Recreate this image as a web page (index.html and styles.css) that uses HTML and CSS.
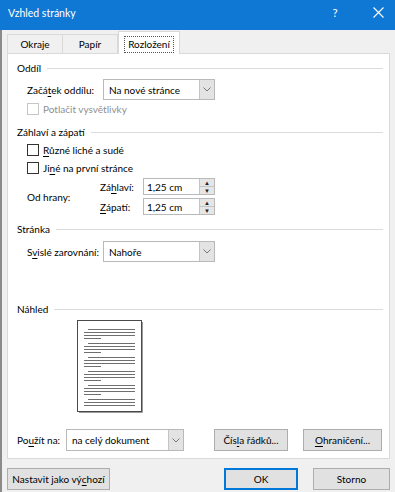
FILE: index.html
```html
<!DOCTYPE html>
<html lang="cs">
<head>
<meta charset="utf-8">
<title>Vzhled stránky</title>
<link rel="stylesheet" href="styles.css">
</head>
<body>
<div class="window">
  <div class="titlebar">
    <span class="title">Vzhled stránky</span>
    <span class="help">?</span>
    <span class="close"><svg width="11" height="11" viewBox="0 0 11 11"><path d="M0.5 0.5 L10.5 10.5 M10.5 0.5 L0.5 10.5" stroke="#fff" stroke-width="1.1" fill="none"/></svg></span>
  </div>
  <div class="body">
    <div class="tabs">
      <div class="tab t1">Okraje</div>
      <div class="tab t2">Papír</div>
      <div class="tab active"><span class="focus">Rozložení</span></div>
    </div>
    <div class="panel">
      <div class="ghead"><span>Oddíl</span><i></i></div>
      <div class="row r-start">
        <span class="lbl">Začá<u>t</u>ek oddílu:</span>
        <div class="combo w112"><span class="val">Na nové stránce</span><span class="arrow"><svg width="8" height="5" viewBox="0 0 8 5"><path d="M0.5 0.5 L4 4 L7.5 0.5" stroke="#777" fill="none"/></svg></span></div>
      </div>
      <div class="check disabled r-sup"><span class="box"></span><span>Potlačit vysvětlivky</span></div>

      <div class="ghead g2"><span>Záhlaví a zápatí</span><i></i></div>
      <div class="check r-c1"><span class="box"></span><span><u>R</u>ůzné liché a sudé</span></div>
      <div class="check r-c2"><span class="box"></span><span>Ji<u>n</u>é na první stránce</span></div>
      <div class="edge">
        <span class="lbl">Od hrany:</span>
        <div class="spins">
          <div class="srow"><span class="slbl">Zá<u>h</u>laví:</span><div class="spin"><span class="val">1,25 cm</span><span class="sbtns"><span class="sb">▲</span><span class="sb">▼</span></span></div></div>
          <div class="srow"><span class="slbl"><u>Z</u>ápatí:</span><div class="spin"><span class="val">1,25 cm</span><span class="sbtns"><span class="sb">▲</span><span class="sb">▼</span></span></div></div>
        </div>
      </div>

      <div class="ghead g3"><span>Stránka</span><i></i></div>
      <div class="row r-valign">
        <span class="lbl">S<u>v</u>islé zarovnání:</span>
        <div class="combo w112"><span class="val">Nahoře</span><span class="arrow"><svg width="8" height="5" viewBox="0 0 8 5"><path d="M0.5 0.5 L4 4 L7.5 0.5" stroke="#777" fill="none"/></svg></span></div>
      </div>

      <div class="ghead g4"><span>Náhled</span><i></i></div>
      <div class="preview">
        <svg class="page" width="66" height="93" viewBox="0 0 66 93">
          <rect x="0.5" y="0.5" width="64" height="91" fill="#fff" stroke="#4a4a4a"/>
          <path d="M65.5 2 V92.5 H2" stroke="#9a9a9a" fill="none"/>
          <g stroke="#6f6f6f" stroke-width="1">
            <path d="M11 9.5 H58 M7 12.5 H58 M7 15.5 H58 M7 18.5 H24"/>
            <path d="M11 23.5 H58 M7 26.5 H58 M7 29.5 H58 M7 32.5 H24"/>
            <path d="M11 37.5 H58 M7 40.5 H58 M7 43.5 H58 M7 46.5 H24"/>
            <path d="M11 51.5 H58 M7 54.5 H58 M7 57.5 H58 M7 60.5 H24"/>
            <path d="M11 65.5 H58 M7 68.5 H58 M7 71.5 H58 M7 74.5 H24"/>
            <path d="M11 79.5 H58 M7 82.5 H58 M7 85.5 H58"/>
          </g>
        </svg>
      </div>

      <div class="row r-apply">
        <span class="lbl2">Po<u>u</u>žít na:</span>
        <div class="combo w118"><span class="val">na celý dokument</span><span class="arrow"><svg width="8" height="5" viewBox="0 0 8 5"><path d="M0.5 0.5 L4 4 L7.5 0.5" stroke="#777" fill="none"/></svg></span></div>
        <button class="btn b-lines">Čís<u>l</u>a řádků...</button>
        <button class="btn b-borders"><u>O</u>hraničení...</button>
      </div>
    </div>
    <div class="footer">
      <button class="btn b-default">Nastavit jako vý<u>c</u>hozí</button>
      <button class="btn b-ok">OK</button>
      <button class="btn b-cancel">Storno</button>
    </div>
  </div>
</div>
</body>
</html>
```

FILE: styles.css
```css
* { box-sizing: border-box; }
html, body { margin: 0; padding: 0; }
body {
  width: 395px;
  height: 492px;
  overflow: hidden;
  background: #f0f0f0;
  font-family: Lato, "Noto Sans", sans-serif;
  font-size: 10px;
  line-height: 14px;
  color: #000;
  white-space: nowrap;
}
u { text-decoration: underline; text-underline-offset: 1.5px; }

.window { width: 395px; height: 492px; display: flex; flex-direction: column; }

.titlebar {
  height: 30px;
  background: #0f78d4;
  color: #fff;
  display: flex;
  align-items: center;
  padding-left: 8px;
  flex: none;
}
.title { font-size: 10.5px; flex: 1; line-height: 1; margin-top: -4px; }
.help { width: 16px; text-align: center; margin-right: 30px; margin-top: -4px; font-size: 11.5px; }
.close { width: 11px; height: 11px; margin-right: 11px; margin-top: -6px; display: flex; }

.body {
  flex: 1;
  border-left: 2px solid #8b8b8b;
  padding: 0 5px 0 5px;
  display: flex;
  flex-direction: column;
}

.tabs { display: flex; height: 22px; margin-top: 1px; align-items: flex-end; position: relative; z-index: 1; }
.tab {
  height: 19px;
  border: 1px solid #d9d9d9;
  border-bottom: none;
  display: flex;
  align-items: center;
  justify-content: center;
  background: #f0f0f0;
}
.t1 { width: 56px; }
.t2 { width: 55px; border-left: none; }
.tab.active {
  width: 62px;
  background: #fff;
  margin-bottom: -1px;
  height: 23px;
  align-items: flex-start;
  padding-top: 4px;
}
.focus { border: 1px dotted #555; padding: 0 3px; line-height: 14px; height: 17px; }

.panel {
  width: 383px;
  height: 406px;
  background: #fff;
  border: 1px solid #d9d9d9;
  padding: 7px 6px 7px 9px;
  display: flex;
  flex-direction: column;
}

.ghead { height: 14px; display: flex; align-items: center; gap: 6px; }
.ghead span { line-height: 14px; }
.ghead i { flex: 1; height: 1px; background: #dcdcdc; }
.g2 { margin-top: 8px; }
.g3 { margin-top: 7px; }
.g4 { margin-top: 40px; }

.row { display: flex; align-items: center; }
.lbl { width: 76px; margin-left: 10px; flex: none; }
.lbl2 { width: 49px; flex: none; }
.r-start { margin-top: 4px; height: 21px; }
.r-valign { margin-top: 5px; height: 21px; }

.combo {
  height: 21px;
  border: 1px solid #b9b9b9;
  display: flex;
  align-items: stretch;
  background: #fff;
  flex: none;
}
.w112 { width: 112px; }
.w118 { width: 118px; height: 22px; }
.combo .val { flex: 1; padding-left: 5px; display: flex; align-items: center; }
.arrow {
  width: 15px;
  background: #e3e3e3;
  border-left: 1px solid #c4c4c4;
  display: flex;
  align-items: center;
  justify-content: center;
}

.check { display: flex; align-items: center; height: 16px; margin-left: 10px; gap: 4px; }
.check .box { width: 12px; height: 12px; border: 1px solid #333; background: #fff; flex: none; }
.disabled { color: #8f8f8f; }
.disabled .box { border-color: #c6c6c6; }
.r-sup { margin-top: 1px; }
.r-c1 { margin-top: 3px; }
.r-c2 { margin-top: 2px; }

.edge { display: flex; align-items: center; margin-top: 2px; }
.edge .lbl { width: 73px; }
.spins { display: flex; flex-direction: column; gap: 3px; }
.srow { display: flex; align-items: center; height: 17px; }
.slbl { width: 43px; }
.spin {
  width: 72px;
  height: 17px;
  border: 1px solid #b9b9b9;
  display: flex;
}
.spin .val { flex: 1; padding-left: 3px; display: flex; align-items: center; }
.sbtns { width: 15px; display: flex; flex-direction: column; border-left: 1px solid #c4c4c4; }
.sb {
  flex: 1;
  background: #e6e6e6;
  font-size: 6px;
  line-height: 7px;
  text-align: center;
  color: #222;
}
.sb + .sb { border-top: 1px solid #c4c4c4; }

.preview { margin-top: 4px; margin-left: 60px; height: 93px; }
.page { display: block; }

.r-apply { margin-top: 16px; height: 22px; }
.btn {
  font-family: inherit;
  font-size: 10px;
  color: #000;
  background: #e1e1e1;
  border: 1px solid #adadad;
  height: 22px;
  padding: 0;
  display: flex;
  align-items: center;
  justify-content: center;
  white-space: nowrap;
}
.b-lines { width: 74px; margin-left: 30px; }
.b-borders { width: 79px; margin-left: 15px; }

.footer { display: flex; margin-top: 9px; height: 22px; }
.b-default { width: 103px; margin-left: 0; }
.b-ok { width: 74px; margin-left: 114px; border: 1px solid #0078d7; box-shadow: inset 0 0 0 1px #0078d7; }
.b-cancel { width: 77px; margin-left: 15px; }
```
